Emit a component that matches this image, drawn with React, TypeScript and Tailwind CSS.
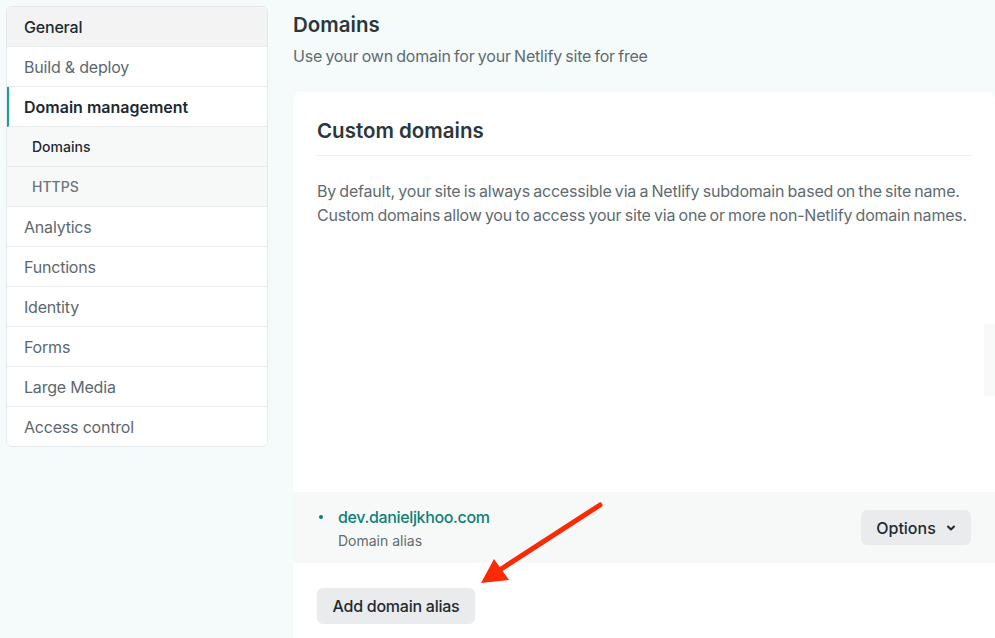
import React from "react";

const font = { fontFamily: "Inter, 'Liberation Sans', sans-serif" };

function NavItem({
  label,
  variant,
}: {
  label: string;
  variant: "general" | "normal" | "active" | "sub" | "subActive";
}) {
  if (variant === "general")
    return (
      <div className="h-10 flex items-center px-[17px] bg-[#f3f3f4] text-[16px] font-medium tracking-[-0.2px] text-[#1e2a30] border-b border-[#e9ebec] rounded-t-[6px]">
        {label}
      </div>
    );
  if (variant === "active")
    return (
      <div className="h-10 flex items-center pl-[15px] border-l-2 border-l-[#15a196] text-[16px] font-semibold text-[#1e2a30] border-b border-b-[#e9ebec] bg-white">
        {label}
      </div>
    );
  if (variant === "sub")
    return (
      <div className="h-10 flex items-center pl-[25px] text-[14px] font-medium text-[#6b767b] border-b border-[#e9ebec] bg-[#f7f9f9]">
        {label}
      </div>
    );
  if (variant === "subActive")
    return (
      <div className="h-10 flex items-center pl-[25px] text-[14px] font-medium text-[#1e2a30] border-b border-[#e9ebec] bg-[#f7f9f9]">
        {label}
      </div>
    );
  return (
    <div className="h-10 flex items-center px-[17px] text-[16px] tracking-[-0.2px] text-[#5c686e] border-b border-[#e9ebec] bg-white">
      {label}
    </div>
  );
}

export default function App() {
  return (
    <div className="relative w-[995px] h-[638px] overflow-hidden bg-[#f5fbfb]" style={font}>
      <div className="flex pl-[6px] pt-[6px] gap-[25px]">
        <div className="w-[262px] shrink-0 self-start rounded-[6px] border border-[#e6e9eb] bg-white overflow-hidden">
          <NavItem label="General" variant="general" />
          <NavItem label="Build & deploy" variant="normal" />
          <NavItem label="Domain management" variant="active" />
          <NavItem label="Domains" variant="subActive" />
          <NavItem label="HTTPS" variant="sub" />
          <NavItem label="Analytics" variant="normal" />
          <NavItem label="Functions" variant="normal" />
          <NavItem label="Identity" variant="normal" />
          <NavItem label="Forms" variant="normal" />
          <NavItem label="Large Media" variant="normal" />
          <div className="h-[39px] flex items-center px-[17px] text-[16px] tracking-[-0.2px] text-[#5c686e] bg-white">
            Access control
          </div>
        </div>

        <div className="flex-1 min-w-0 pt-[5px]">
          <h1 className="text-[20.5px] leading-[28px] font-semibold text-[#2b373c]">Domains</h1>
          <p className="mt-[5px] text-[16px] leading-[24px] text-[#5f6b70] tracking-[-0.2px] [word-spacing:-1px] whitespace-nowrap">
            Use your own domain for your Netlify site for free
          </p>

          <div className="mt-[24px] bg-white rounded-l-[8px] rounded-tr-[8px] h-[600px]">
            <div className="px-[24px] pt-[25px]">
              <h2 className="text-[20.5px] leading-[28px] font-semibold text-[#2b373c] pb-[10px] border-b border-[#eef0f1]">
                Custom domains
              </h2>
              <p className="mt-[23px] text-[16px] leading-[24px] text-[#5f6b70] tracking-[-0.2px] [word-spacing:-1px] whitespace-nowrap">
                By default, your site is always accessible via a Netlify subdomain based on the site name.
                <br />
                Custom domains allow you to access your site via one or more non-Netlify domain names.
              </p>
            </div>

            <div className="mt-[265px] h-[71px] bg-[#f7f9f9] flex items-center justify-between pl-[24px] pr-[24px]">
              <div className="flex">
                <div className="w-[4px] h-[4px] rounded-full bg-[#0e7e77] mt-[10px] ml-[2px]" />
                <div className="ml-[15px]">
                  <div className="text-[16px] leading-[24px] font-medium tracking-[-0.35px] text-[#0e8078]">dev.danieljkhoo.com</div>
                  <div className="text-[14px] leading-[20px] text-[#5f6b70] mt-[2px]">Domain alias</div>
                </div>
              </div>
              <button className="h-[35px] w-[110px] rounded-[6px] bg-[#e9ebed] flex items-center justify-center gap-[10px] text-[16px] font-medium text-[#1e2a30]">
                Options
                <svg width="10" height="8" viewBox="0 0 10 8">
                  <path d="M2 2.5 L5 5.5 L8 2.5" stroke="#1e2a30" strokeWidth="2" fill="none" strokeLinecap="round" strokeLinejoin="round" />
                </svg>
              </button>
            </div>

            <div className="px-[24px] mt-[25px]">
              <button className="h-[36px] w-[158px] rounded-[6px] bg-[#e9ebed] text-[16px] font-medium tracking-[-0.25px] text-[#1e2a30]">
                Add domain alias
              </button>
            </div>
          </div>
        </div>
      </div>

      <div className="absolute left-[984px] top-[324px] w-[11px] h-[72px] bg-[#f8fafa]" />

      <svg className="absolute left-0 top-0" width="995" height="638" viewBox="0 0 995 638">
        <line x1="600" y1="505" x2="498" y2="571" stroke="#fb2a05" strokeWidth="5" strokeLinecap="round" />
        <polygon points="481,583 494,559 509,580" fill="#fb2a05" />
      </svg>
    </div>
  );
}
